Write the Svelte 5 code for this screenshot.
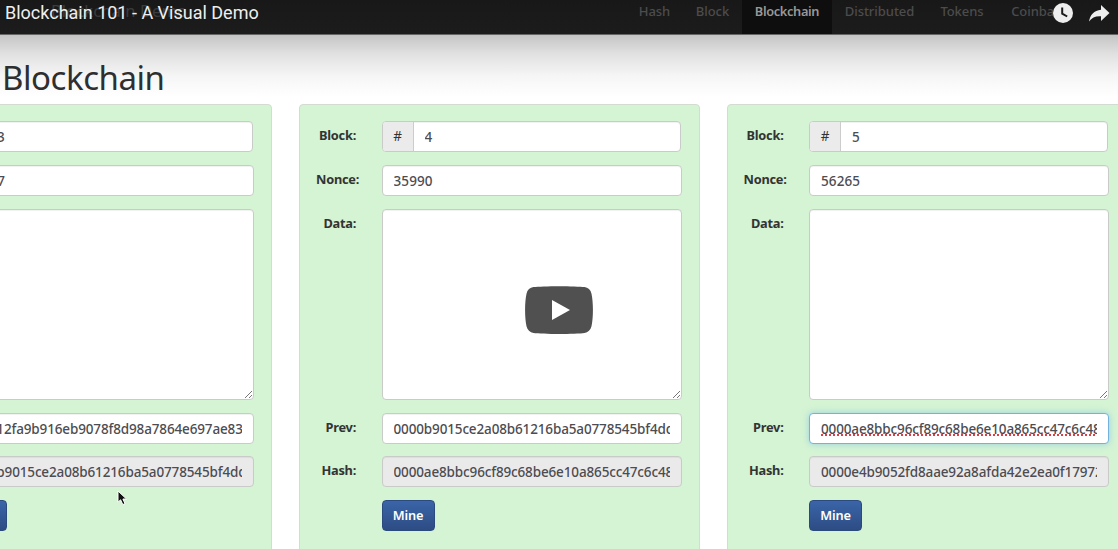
<script>
  const blocks = [
    { number: '3', nonce: '12937', prev: '000012fa9b916eb9078f8d98a7864e697ae83', hash: '0000b9015ce2a08b61216ba5a0778545bf4dd' },
    { number: '4', nonce: '35990', prev: '0000b9015ce2a08b61216ba5a0778545bf4dd', hash: '0000ae8bbc96cf89c68be6e10a865cc47c6c48' },
    { number: '5', nonce: '56265', prev: '0000ae8bbc96cf89c68be6e10a865cc47c6c48', hash: '0000e4b9052fd8aae92a8afda42e2ea0f17972', focused: true }
  ];
  const links = [
    { text: 'Hash', width: 57 },
    { text: 'Block', width: 59 },
    { text: 'Blockchain', width: 90, active: true },
    { text: 'Distributed', width: 95 },
    { text: 'Tokens', width: 70 },
    { text: 'Coinbase', width: 85 }
  ];
</script>

<div class="player">
  <nav>
    <span class="brand">Blockchain Demo</span>
    <div class="links">
      {#each links as link}
        <span class="link" class:active={link.active} style:width="{link.width}px">{link.text}</span>
      {/each}
    </div>
  </nav>

  <main>
    <h1>Blockchain</h1>
    <div class="chain">
      {#each blocks as block}
        <section class="card">
          <div class="row">
            <label>Block:</label>
            <div class="field group"><span class="addon">#</span><span class="text">{block.number}</span></div>
          </div>
          <div class="row">
            <label>Nonce:</label>
            <div class="field"><span class="text nonce">{block.nonce}</span></div>
          </div>
          <div class="row data">
            <label>Data:</label>
            <div class="field area">
              <svg class="grip" width="9" height="9" viewBox="0 0 9 9"><path d="M1 8L8 1M5 8L8 5" /></svg>
            </div>
          </div>
          <div class="row">
            <label>Prev:</label>
            <div class="field" class:focused={block.focused}><span class="text hex">{block.prev}</span></div>
          </div>
          <div class="row">
            <label>Hash:</label>
            <div class="field disabled"><span class="text hex">{block.hash}</span></div>
          </div>
          <div class="row">
            <label></label>
            <button>Mine</button>
          </div>
        </section>
      {/each}
    </div>
  </main>

  <div class="shade"></div>
  <div class="title">Blockchain 101 - A Visual Demo</div>
  <svg class="icon later" width="20" height="20" viewBox="0 0 20 20">
    <circle cx="10" cy="10" r="10" fill="#eee" />
    <path d="M9.2 4.5V10.6L14.2 13.5" fill="none" stroke="#1b1b1b" stroke-width="2" />
  </svg>
  <svg class="icon share" width="21" height="17" viewBox="0 0 21 17">
    <path d="M12 0L20.5 8L12 16V11.2C6.5 10.8 3 12.6 0 16.5C1 10 5 5.3 12 4.7Z" fill="#eee" />
  </svg>
  <svg class="play" width="68" height="48" viewBox="0 0 68 48">
    <path d="M66.5 7.7C65.7 3.8 63 1.6 59.5 1.1C51 -.2 17 -.2 8.5 1.1C5 1.6 2.3 3.8 1.5 7.7C-.4 16 -.4 32 1.5 40.3C2.3 44.2 5 46.4 8.5 46.9C17 48.2 51 48.2 59.5 46.9C63 46.4 65.7 44.2 66.5 40.3C68.4 32 68.4 16 66.5 7.7Z" fill="#505050" />
    <path d="M27 14L45 24L27 34Z" fill="#fff" />
  </svg>
  <svg class="cursor" width="12" height="17" viewBox="0 0 12 17">
    <path d="M1 1V12.2L3.6 9.8L5.8 14.6L8 13.6L5.9 9H9.5Z" fill="#111" stroke="#fff" stroke-width="1" />
  </svg>
</div>

<style>
  :global(body) { margin: 0; background: #fff; }
  .player {
    position: relative;
    width: 1118px;
    height: 549px;
    overflow: hidden;
    background: #fff;
    font-family: "Noto Sans", "Open Sans", sans-serif;
    color: #333;
  }
  nav {
    display: flex;
    justify-content: space-between;
    box-sizing: border-box;
    height: 35px;
    padding-left: 51px;
    background: linear-gradient(#181818, #1c1c1c);
    border-bottom: 1px solid #666;
    overflow: hidden;
  }
  .brand { font-size: 16.5px; line-height: 22px; letter-spacing: .1px; color: #3c3c3c; }
  .links { display: flex; margin-right: 36px; }
  .link {
    flex: none;
    height: 34px;
    line-height: 22px;
    text-align: center;
    font-size: 13px;
    font-weight: 500;
    letter-spacing: -.05px;
    color: #4c4c4c;
    white-space: nowrap;
  }
  .active { background: #0e0e0e; color: #989898; font-weight: 600; font-size: 12.8px; letter-spacing: -.35px; line-height: 23px; }
  h1 {
    margin: 0;
    padding-left: 2px;
    height: 69px;
    line-height: 85px;
    font-size: 33px;
    font-weight: 450;
    letter-spacing: -.45px;
    color: #303033;
  }
  .chain { display: flex; gap: 27px; width: 1256px; margin-left: -128.5px; }
  .card {
    flex: none;
    box-sizing: border-box;
    width: 400.5px;
    height: 460px;
    padding: 16.2px 16.8px 0 16px;
    background: #d5f4d3;
    border: 1px solid #d2dcd0;
    border-radius: 4px;
  }
  .row { display: flex; height: 43.7px; }
  .row.data { height: 204px; }
  label {
    flex: none;
    width: 40px;
    margin-right: 25.5px;
    line-height: 28px;
    font-size: 12.8px;
    font-weight: 700;
    letter-spacing: -.25px;
    white-space: nowrap;
    text-align: right;
  }
  .field {
    flex: 1;
    min-width: 0;
    box-sizing: border-box;
    display: flex;
    height: 31px;
    padding: 0 11px;
    background: #fff;
    border: 1px solid #c8cbc8;
    border-radius: 4px;
    box-shadow: inset 0 1px 1px rgba(0, 0, 0, .06);
  }
  .text {
    flex: 1;
    overflow: hidden;
    white-space: nowrap;
    line-height: 30px;
    font-size: 13.5px;
    font-weight: 500;
    color: #4c4c51;
  }
  .nonce { letter-spacing: .1px; }
  .hex { letter-spacing: -.14px; }
  .group { padding-left: 0; margin-right: 1px; }
  .addon {
    width: 30px;
    margin-right: 11px;
    text-align: center;
    line-height: 29px;
    font-size: 13.5px;
    background: #ebebeb;
    border-right: 1px solid #ccc;
    border-radius: 3px 0 0 3px;
  }
  .area { height: 191px; padding: 0; align-items: flex-end; justify-content: flex-end; }
  .grip { fill: none; stroke: #777; stroke-width: 1; }
  .disabled { background: #ebeaeb; }
  .focused { border-color: #72b2dc; box-shadow: 0 0 7px rgba(102, 175, 233, .55); }
  .focused .text { text-decoration: underline dotted #df3c45 2px; text-underline-offset: 1px; text-decoration-skip-ink: none; }
  button {
    width: 53px;
    height: 31px;
    padding: 0;
    border: 1px solid #2b4b80;
    border-radius: 4px;
    background: linear-gradient(#3a65a8, #2d4c83);
    color: #fff;
    font: 600 12.8px/27px "Noto Sans", sans-serif;
    letter-spacing: -.2px;
  }
  .shade {
    position: absolute;
    inset: 35px 0 auto 0;
    height: 62px;
    background: linear-gradient(rgba(0, 0, 0, .23), rgba(0, 0, 0, .12) 30%, rgba(0, 0, 0, .04) 65%, transparent);
  }
  .title {
    position: absolute;
    left: 5px;
    top: 2px;
    font: 18px/22px Roboto, sans-serif;
    color: #eee;
    white-space: nowrap;
  }
  .icon, .play, .cursor { position: absolute; }
  .later { left: 1053px; top: 3px; }
  .share { left: 1089px; top: 5px; }
  .play { left: 525px; top: 286px; }
  .cursor { left: 117px; top: 490px; }
</style>
